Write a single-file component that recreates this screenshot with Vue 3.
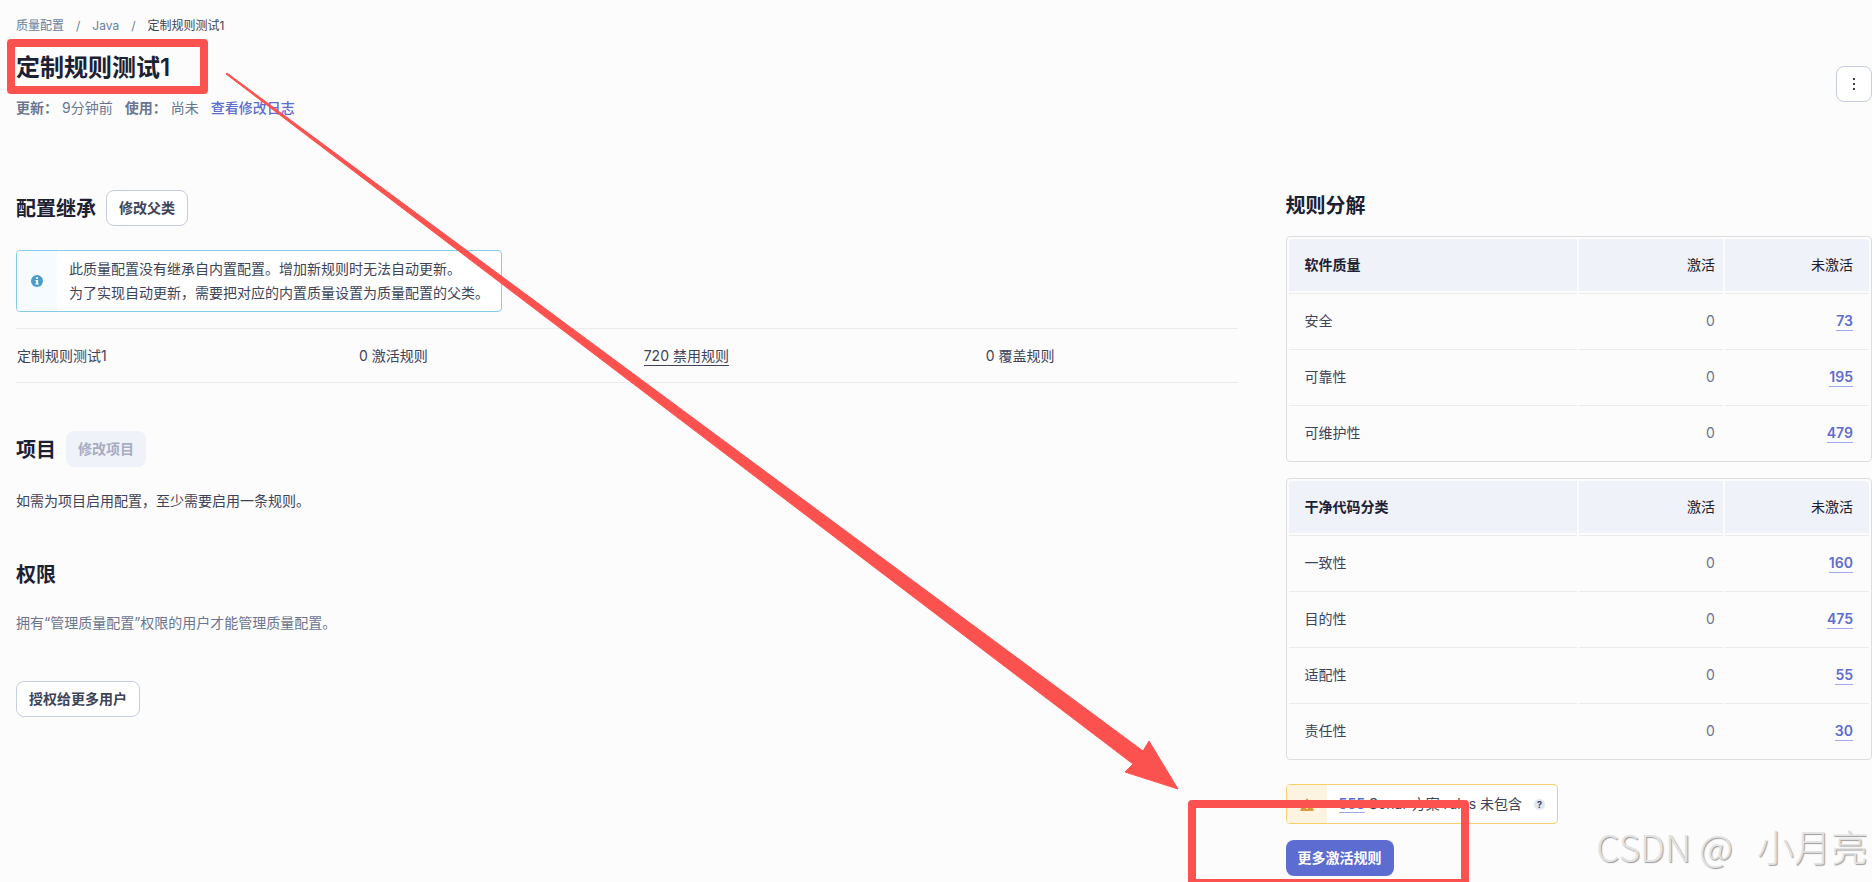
<script setup>
const inheritance = { name: '定制规则测试1', active: 0, inactive: 720, overridden: 0 }

const breakdowns = [
  {
    title: '软件质量',
    rows: [
      { name: '安全', active: 0, inactive: 73 },
      { name: '可靠性', active: 0, inactive: 195 },
      { name: '可维护性', active: 0, inactive: 479 }
    ]
  },
  {
    title: '干净代码分类',
    rows: [
      { name: '一致性', active: 0, inactive: 160 },
      { name: '目的性', active: 0, inactive: 475 },
      { name: '适配性', active: 0, inactive: 55 },
      { name: '责任性', active: 0, inactive: 30 }
    ]
  }
]
</script>

<template>
  <div class="page">
    <header class="page-header">
      <div>
        <nav class="breadcrumbs">
          <a href="#">质量配置</a>
          <span class="sep">/</span>
          <a href="#">Java</a>
          <span class="sep">/</span>
          <a href="#" class="current">定制规则测试1</a>
        </nav>
        <h1>定制规则测试1</h1>
        <div class="meta">
          <span><strong>更新：</strong>9分钟前</span>
          <span><strong>使用：</strong>尚未</span>
          <a href="#">查看修改日志</a>
        </div>
      </div>
      <button class="btn btn-icon" type="button" aria-label="操作">
        <svg width="16" height="16" viewBox="0 0 16 16" fill="currentColor">
          <rect x="7" y="2" width="2" height="2" />
          <rect x="7" y="7" width="2" height="2" />
          <rect x="7" y="12" width="2" height="2" />
        </svg>
      </button>
    </header>

    <div class="columns">
      <main>
        <section class="inheritance">
          <div class="heading">
            <h2>配置继承</h2>
            <button class="btn" type="button">修改父类</button>
          </div>
          <div class="alert info">
            <div class="alert-icon">
              <svg width="12" height="12" viewBox="0 0 12 12">
                <circle cx="6" cy="6" r="6" fill="#4b9bcd" />
                <path d="M5 2.2h2v1.8H5zM4.4 5h2.7v3.4h.6v1.2H4.3V8.4h.8V6.1h-.7z" fill="#fff" />
              </svg>
            </div>
            <div class="alert-body">
              此质量配置没有继承自内置配置。增加新规则时无法自动更新。<br />
              为了实现自动更新，需要把对应的内置质量设置为质量配置的父类。
            </div>
          </div>
          <table class="profile-table">
            <tbody>
              <tr>
                <td class="col-name">{{ inheritance.name }}</td>
                <td class="col-active">{{ inheritance.active }} 激活规则</td>
                <td class="col-inactive"><a href="#">{{ inheritance.inactive }} 禁用规则</a></td>
                <td>{{ inheritance.overridden }} 覆盖规则</td>
              </tr>
            </tbody>
          </table>
        </section>

        <section class="projects">
          <div class="heading">
            <h2>项目</h2>
            <button class="btn" type="button" disabled>修改项目</button>
          </div>
          <p>如需为项目启用配置，至少需要启用一条规则。</p>
        </section>

        <section class="permissions">
          <h2>权限</h2>
          <p class="subtle">拥有“管理质量配置”权限的用户才能管理质量配置。</p>
          <button class="btn" type="button">授权给更多用户</button>
        </section>
      </main>

      <aside>
        <h2>规则分解</h2>
        <table v-for="group in breakdowns" :key="group.title" class="rules-table">
          <thead>
            <tr>
              <th>{{ group.title }}</th>
              <th class="num">激活</th>
              <th class="num last">未激活</th>
            </tr>
          </thead>
          <tbody>
            <tr v-for="row in group.rows" :key="row.name">
              <td>{{ row.name }}</td>
              <td class="num zero">{{ row.active }}</td>
              <td class="num last"><a href="#">{{ row.inactive }}</a></td>
            </tr>
          </tbody>
        </table>

        <div class="alert warning">
          <div class="alert-icon">
            <svg width="14" height="13" viewBox="0 0 14 13">
              <path d="M7 0.8 L13.4 12.4 H0.6 Z" fill="#d99a32" stroke="#d99a32" stroke-linejoin="round" />
              <path d="M6.2 4.5h1.6v4H6.2zM6.2 9.5h1.6V11H6.2z" fill="#fdf4e1" />
            </svg>
          </div>
          <div class="alert-body">
            <a href="#">555</a> Sonar 方案 rules 未包含
            <span class="help">?</span>
          </div>
        </div>
        <button class="btn btn-primary" type="button">更多激活规则</button>
      </aside>
    </div>

    <!-- annotation layer -->
    <div class="mark mark-title"></div>
    <div class="mark mark-action"></div>
    <svg class="arrow" width="954" height="718" viewBox="0 0 954 718">
      <path d="M1 2 L2 1 L918 679 L924 669 L953 717 L900 700 L908 692 Z" fill="#fb5250" stroke="#fb5250" stroke-linejoin="round" />
    </svg>
    <div class="watermark"><span>CSDN @</span><span>小月亮</span></div>
  </div>
</template>

<style>
body {
  margin: 0;
  background: #fcfcfd;
}
</style>

<style scoped>
.page {
  position: relative;
  box-sizing: border-box;
  min-height: 100vh;
  padding: 15px 0 6px 16px;
  overflow: hidden;
  font-family: Inter, "Noto Sans CJK SC", sans-serif;
  font-size: 14px;
  line-height: 20px;
  color: #3e4357;
}
h1, h2, p { margin: 0; }
h1, h2 { color: #1b2032; font-weight: 600; }
h1 { font-size: 24px; line-height: 32px; margin-top: 16px; }
h2 { font-size: 20px; line-height: 28px; }
a { color: #5d6cd0; text-decoration: none; }

.page-header { display: flex; justify-content: space-between; align-items: center; height: 104px; margin-bottom: 69px; }
.breadcrumbs { display: flex; gap: 12px; font-size: 12px; }
.breadcrumbs a, .breadcrumbs .sep { color: #69809b; }
.breadcrumbs a.current { color: #3e4357; }
.meta { display: flex; gap: 12px; margin-top: 14px; color: #6a7590; }
.meta strong { font-weight: 600; margin-right: 4px; }
.meta a { font-weight: 500; }

.btn {
  box-sizing: border-box;
  height: 36px;
  padding: 0 12px;
  border: 1px solid #c5cddf;
  border-radius: 8px;
  background: #fff;
  color: #3e4357;
  font: inherit;
  font-weight: 600;
}
.btn:disabled { border: 0; background: #eff2f9; color: #a6adc2; }
.btn-icon { display: flex; align-items: center; padding: 0 9px; margin-top: 34px; }
.btn-primary { border: 0; background: #5d6cd0; color: #fff; }

.columns { display: grid; grid-template-columns: minmax(0, 25fr) minmax(0, 12fr); gap: 48px; }
.heading { display: flex; align-items: center; gap: 10px; }
.heading h2 { padding-top: 2px; }
main { padding-top: 2px; }

.alert { display: flex; width: fit-content; border: 1px solid; border-radius: 4px; background: #fff; overflow: hidden; }
.alert-icon { display: flex; align-items: center; justify-content: center; width: 40px; }
.alert-body { padding: 6px 12px; line-height: 24px; }
.info { margin-top: 24px; border-color: #85cbed; }
.info .alert-icon { background: #f5fbff; }
.warning { margin-top: 24px; border-color: #f8cf68; }
.warning .alert-icon { background: #fdf3e1; }
.warning .alert-body { padding: 7px 12px; }
.warning a { font-weight: 600; border-bottom: 1px solid #9fa8ed; }
.help {
  display: inline-block;
  width: 11px;
  height: 11px;
  margin-left: 8px;
  border-radius: 50%;
  background: #e1e6f3;
  font-size: 9px;
  font-weight: 700;
  line-height: 11px;
  text-align: center;
  vertical-align: 1px;
}

.profile-table { width: 100%; margin-top: 16px; border-collapse: collapse; table-layout: fixed; border-top: 1px solid #ebebeb; border-bottom: 1px solid #ebebeb; }
.profile-table td { box-sizing: border-box; height: 54px; padding: 0 1px; }
.profile-table a { padding-bottom: 1px; border-bottom: 1px solid #3e4357; color: #3e4357; }
.col-name, .col-inactive { width: 28%; }
.col-active { width: 23.3%; }

.projects { margin-top: 48px; }
.projects p { margin-top: 24px; }
.permissions { margin-top: 50px; }
.permissions p { margin: 24px 0 48px; }
.subtle { color: #6a7590; }

aside > h2 { margin: 4px 0 16px; }
.rules-table { width: 100%; border: 1px solid #dddddd; border-radius: 4px; border-collapse: separate; border-spacing: 2px; table-layout: fixed; }
.rules-table + .rules-table { margin-top: 16px; }
.rules-table th { box-sizing: border-box; height: 52px; padding: 0 16px; background: #eff2f9; color: #1b2032; font-weight: 600; text-align: left; }
.rules-table th:first-child { width: 50%; border-top-left-radius: 4px; }
.rules-table th:last-child { border-top-right-radius: 4px; }
.rules-table td { box-sizing: border-box; height: 54px; padding: 0 16px; border-top: 1px solid #ebebeb; }
.rules-table .num { padding-right: 8px; text-align: right; font-weight: 400; }
.rules-table .last { padding-right: 16px; }
.rules-table .zero { color: #6a7590; }
.rules-table td a { padding-bottom: 1px; border-bottom: 1px solid #9fa8ed; font-weight: 600; }
aside .btn-primary { display: block; margin-top: 16px; }

.mark { position: absolute; box-sizing: border-box; border: 8px solid #fb5250; border-radius: 4px; pointer-events: none; }
.mark-title { left: 7px; top: 39px; width: 201px; height: 55px; }
.mark-action { left: 1188px; top: 800px; width: 281px; height: 87px; }
.arrow { position: absolute; left: 225px; top: 72px; pointer-events: none; }
.watermark {
  position: absolute;
  right: 4px;
  bottom: 10px;
  display: flex;
  gap: 24px;
  font-family: "Noto Sans CJK SC", sans-serif;
  font-size: 37px;
  font-weight: 300;
  line-height: 52px;
  color: #e2e2e2;
  text-shadow: 1px 1px 1px #999;
  pointer-events: none;
}
</style>
